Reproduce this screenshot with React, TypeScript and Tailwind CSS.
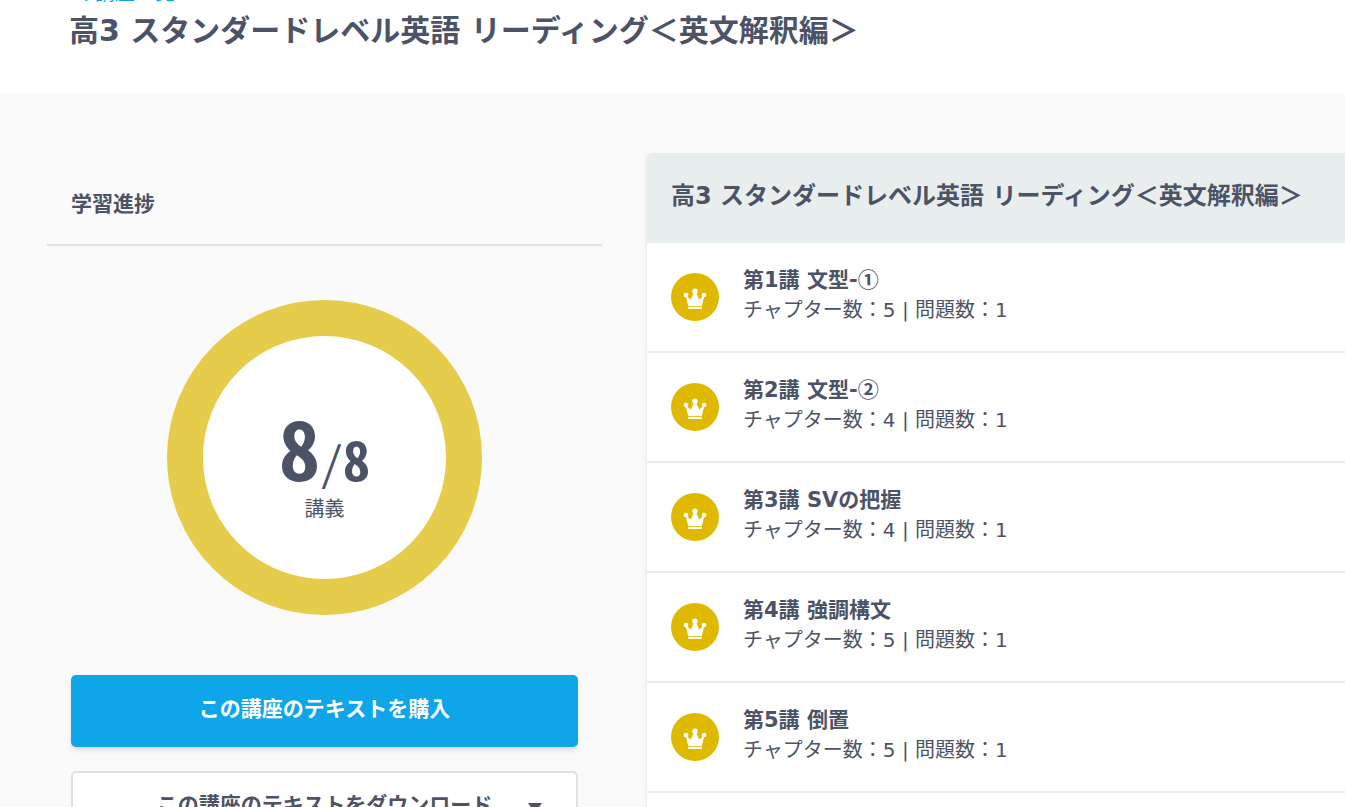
import { ChevronLeft } from "lucide-react";

const lectures = [
  { title: "第1講 文型-", mark: "①", chapters: 5, questions: 1 },
  { title: "第2講 文型-", mark: "②", chapters: 4, questions: 1 },
  { title: "第3講 SVの把握", chapters: 4, questions: 1 },
  { title: "第4講 強調構文", chapters: 5, questions: 1 },
  { title: "第5講 倒置", chapters: 5, questions: 1 },
  { title: "第6講 比較", chapters: 5, questions: 1 },
];

const courseTitle = "高3 スタンダードレベル英語 リーディング＜英文解釈編＞";

function CrownIcon() {
  return (
    <svg viewBox="0 0 24 22" className="w-6 h-[22px] mt-1" fill="#fff" aria-hidden="true">
      <circle cx="12" cy="3.2" r="2.7" />
      <circle cx="3" cy="7" r="2.3" />
      <circle cx="21" cy="7" r="2.3" />
      <path d="M2.6 7.5 L7.8 11.6 L11 4.5 H13 L16.2 11.6 L21.4 7.5 L18.8 18 H5.2 Z" />
      <rect x="5.2" y="18.8" width="13.6" height="2.2" />
    </svg>
  );
}

function ProgressCircle({ done, total }: { done: number; total: number }) {
  return (
    <div className="size-[315px] rounded-full border-[36px] border-[#e6cc4b] bg-white flex flex-col items-center justify-center pt-5">
      <p className="flex items-baseline font-['Noto_Sans_Mono_CJK_JP','Roboto',sans-serif] font-bold leading-[68px]">
        <span className="text-[82px]">{done}</span>
        <span className="text-[46px] font-normal">/</span>
        <span className="text-[54px]">{total}</span>
      </p>
      <p className="text-xl leading-7">講義</p>
    </div>
  );
}

export default function App() {
  return (
    <div className="min-h-screen overflow-hidden bg-[#fafafa] text-[#4d5366] font-['DejaVu_Sans','Noto_Sans_CJK_JP',sans-serif]">
      <header className="bg-white pl-[69px] pb-10 -mt-[22px]">
        <a href="#" className="flex items-center text-xl leading-[30px] text-[#0ea5e9]">
          <ChevronLeft size={28} className="-mr-0.5" />
          講座一覧
        </a>
        <h1 className="text-[30px] leading-[45px] font-bold whitespace-nowrap">{courseTitle}</h1>
      </header>

      <main className="grid grid-cols-[555fr_698fr] gap-[45px] items-start pt-[60px] pl-[47px]">
        <aside className="min-w-0">
          <h2 className="px-6 pt-[35px] pb-6 text-[21px] leading-8 font-bold border-b-2 border-[#dbe3e5]">学習進捗</h2>
          <div className="flex justify-center py-[54px]">
            <ProgressCircle done={8} total={8} />
          </div>
          <div className="flex flex-col gap-6 px-6 pt-1.5">
            <button className="h-[72px] rounded-[5px] bg-[#0ea5e9] pb-0.5 text-[21px] font-bold text-white shadow-md">
              この講座のテキストを購入
            </button>
            <button className="h-[72px] rounded-[5px] border-2 border-[#dbe3e5] bg-white pb-0.5 text-[21px] font-bold grid grid-cols-[1fr_auto_1fr] items-center">
              <span className="col-start-2">この講座のテキストをダウンロード</span>
              <svg viewBox="0 0 14 10" className="ml-9 mt-1 w-3.5 h-2.5" fill="currentColor" aria-hidden="true">
                <path d="M0 0 H14 L7 10 Z" />
              </svg>
            </button>
          </div>
        </aside>

        <section className="min-w-0 rounded-l-[5px] bg-white shadow-md overflow-hidden">
          <h2 className="bg-[#e8eeee] px-6 pt-[25px] pb-[29px] text-2xl leading-9 font-bold whitespace-nowrap">
            {courseTitle}
          </h2>
          <ul>
            {lectures.map((lecture) => (
              <li key={lecture.title} className="flex h-[110px] items-center gap-6 border-b-2 border-[#e8eeee] px-6">
                <span className="size-12 shrink-0 rounded-full bg-[#dfb900] flex items-center justify-center">
                  <CrownIcon />
                </span>
                <div className="pb-1">
                  <h3 className="text-[21px] leading-[30px] font-bold">
                    {lecture.title}
                    {lecture.mark && (
                      <span className="font-['Noto_Sans_CJK_JP',sans-serif] leading-none">{lecture.mark}</span>
                    )}
                  </h3>
                  <p className="text-xl leading-[30px]">
                    チャプター数：{lecture.chapters} | 問題数：{lecture.questions}
                  </p>
                </div>
              </li>
            ))}
          </ul>
        </section>
      </main>
    </div>
  );
}
